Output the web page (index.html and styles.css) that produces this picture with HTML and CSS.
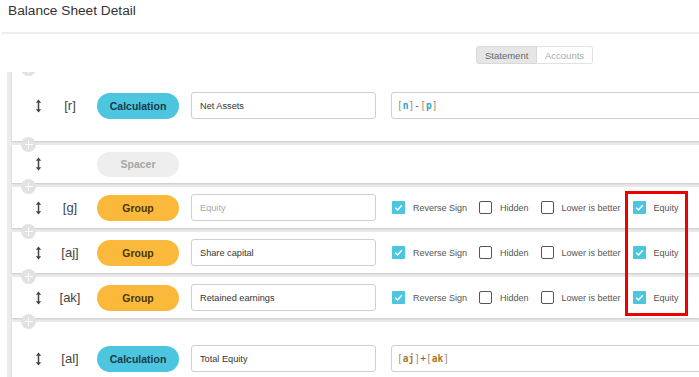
FILE: index.html
```html
<!DOCTYPE html>
<html lang="en">
<head>
  <meta charset="UTF-8">
  <meta name="viewport" content="width=device-width, initial-scale=1.0">
  <title>Balance Sheet Detail</title>
  <link rel="stylesheet" href="styles.css">
</head>
<body>

  <div class="page">
    <header class="page-head">
      <h1>Balance Sheet Detail</h1>
    </header>

    <div class="view-toggle">
      <button class="toggle active">Statement</button>
      <button class="toggle">Accounts</button>
    </div>

    <div class="list-view">
      <ul class="rows">
        <!-- calculation row -->
        <li class="row row-calc">
          <span class="add-btn"></span>
          <span class="handle"><svg width="7" height="14" viewBox="0 0 7 14"><path d="M3.5 3v8" stroke="#444" stroke-width="1.5"/><polygon points="0.8,3.8 3.5,0.6 6.2,3.8" fill="#444"/><polygon points="0.8,10.2 3.5,13.4 6.2,10.2" fill="#444"/></svg></span>
          <span class="ref">[r]</span>
          <span class="pill pill-calc">Calculation</span>
          <input class="field" type="text" value="Net Assets">
          <div class="field formula"><span class="br">[</span><span class="v-blue">n</span><span class="br">]</span><span class="op">-</span><span class="br">[</span><span class="v-blue">p</span><span class="br">]</span></div>
        </li>

        <!-- spacer row -->
        <li class="row row-spacer">
          <span class="add-btn"></span>
          <span class="handle"><svg width="7" height="14" viewBox="0 0 7 14"><path d="M3.5 3v8" stroke="#444" stroke-width="1.5"/><polygon points="0.8,3.8 3.5,0.6 6.2,3.8" fill="#444"/><polygon points="0.8,10.2 3.5,13.4 6.2,10.2" fill="#444"/></svg></span>
          <span class="ref"></span>
          <span class="pill pill-spacer">Spacer</span>
        </li>

        <!-- group rows -->
        <li class="row row-group">
          <span class="add-btn"></span>
          <span class="handle"><svg width="7" height="14" viewBox="0 0 7 14"><path d="M3.5 3v8" stroke="#444" stroke-width="1.5"/><polygon points="0.8,3.8 3.5,0.6 6.2,3.8" fill="#444"/><polygon points="0.8,10.2 3.5,13.4 6.2,10.2" fill="#444"/></svg></span>
          <span class="ref">[g]</span>
          <span class="pill pill-group">Group</span>
          <input class="field" type="text" placeholder="Equity">
          <div class="checks">
            <label class="check on"><span class="box"><svg width="13" height="13" viewBox="0 0 13 13"><polyline points="3.2,6.8 5.5,9 9.8,4.2" fill="none" stroke="#fff" stroke-width="1.5"/></svg></span>Reverse Sign</label>
            <label class="check"><span class="box"></span>Hidden</label>
            <label class="check"><span class="box"></span>Lower is better</label>
            <label class="check on"><span class="box"><svg width="13" height="13" viewBox="0 0 13 13"><polyline points="3.2,6.8 5.5,9 9.8,4.2" fill="none" stroke="#fff" stroke-width="1.5"/></svg></span>Equity</label>
          </div>
        </li>

        <li class="row row-group">
          <span class="add-btn"></span>
          <span class="handle"><svg width="7" height="14" viewBox="0 0 7 14"><path d="M3.5 3v8" stroke="#444" stroke-width="1.5"/><polygon points="0.8,3.8 3.5,0.6 6.2,3.8" fill="#444"/><polygon points="0.8,10.2 3.5,13.4 6.2,10.2" fill="#444"/></svg></span>
          <span class="ref">[aj]</span>
          <span class="pill pill-group">Group</span>
          <input class="field" type="text" value="Share capital">
          <div class="checks">
            <label class="check on"><span class="box"><svg width="13" height="13" viewBox="0 0 13 13"><polyline points="3.2,6.8 5.5,9 9.8,4.2" fill="none" stroke="#fff" stroke-width="1.5"/></svg></span>Reverse Sign</label>
            <label class="check"><span class="box"></span>Hidden</label>
            <label class="check"><span class="box"></span>Lower is better</label>
            <label class="check on"><span class="box"><svg width="13" height="13" viewBox="0 0 13 13"><polyline points="3.2,6.8 5.5,9 9.8,4.2" fill="none" stroke="#fff" stroke-width="1.5"/></svg></span>Equity</label>
          </div>
        </li>

        <li class="row row-group">
          <span class="add-btn"></span>
          <span class="handle"><svg width="7" height="14" viewBox="0 0 7 14"><path d="M3.5 3v8" stroke="#444" stroke-width="1.5"/><polygon points="0.8,3.8 3.5,0.6 6.2,3.8" fill="#444"/><polygon points="0.8,10.2 3.5,13.4 6.2,10.2" fill="#444"/></svg></span>
          <span class="ref">[ak]</span>
          <span class="pill pill-group">Group</span>
          <input class="field" type="text" value="Retained earnings">
          <div class="checks">
            <label class="check on"><span class="box"><svg width="13" height="13" viewBox="0 0 13 13"><polyline points="3.2,6.8 5.5,9 9.8,4.2" fill="none" stroke="#fff" stroke-width="1.5"/></svg></span>Reverse Sign</label>
            <label class="check"><span class="box"></span>Hidden</label>
            <label class="check"><span class="box"></span>Lower is better</label>
            <label class="check on"><span class="box"><svg width="13" height="13" viewBox="0 0 13 13"><polyline points="3.2,6.8 5.5,9 9.8,4.2" fill="none" stroke="#fff" stroke-width="1.5"/></svg></span>Equity</label>
          </div>
        </li>

        <!-- total -->
        <li class="row row-calc">
          <span class="add-btn"></span>
          <span class="handle"><svg width="7" height="14" viewBox="0 0 7 14"><path d="M3.5 3v8" stroke="#444" stroke-width="1.5"/><polygon points="0.8,3.8 3.5,0.6 6.2,3.8" fill="#444"/><polygon points="0.8,10.2 3.5,13.4 6.2,10.2" fill="#444"/></svg></span>
          <span class="ref">[al]</span>
          <span class="pill pill-calc">Calculation</span>
          <input class="field" type="text" value="Total Equity">
          <div class="field formula"><span class="br">[</span><span class="v-gold">aj</span><span class="br">]</span><span class="op">+</span><span class="br">[</span><span class="v-gold">ak</span><span class="br">]</span></div>
        </li>
      </ul>
    </div>

    <div class="highlight"></div>
  </div>

</body>
</html>
```

FILE: styles.css
```css
* {
  box-sizing: border-box;
  margin: 0;
  padding: 0;
}

body {
  font-family: "Liberation Sans", Arial, sans-serif;
  color: #333;
  background-color: #fff;
  overflow: hidden;
}

.page {
  position: relative;
  width: 1069px;
  height: 377px;
}

.page-head {
  height: 34px;
  margin-left: 2px;
  border-bottom: 2px solid #eeeeee;
}

.page-head h1 {
  font-size: 13.7px;
  font-weight: normal;
  color: #333;
  padding: 3px 0 0 6px;
  line-height: 16px;
}

/* Statement / Accounts switch */
.view-toggle {
  display: flex;
  justify-content: center;
  margin-top: 12px;
  height: 18px;
}

.toggle {
  font-family: "Liberation Sans", Arial, sans-serif;
  font-size: 9.5px;
  height: 18px;
  padding: 0 8px;
  background-color: #fff;
  color: #aaa;
  border: 1px solid #e2e2e2;
  border-left: none;
  border-radius: 0 3px 3px 0;
  cursor: pointer;
}

.toggle.active {
  width: 61px;
  background-color: #e6e6e6;
  color: #666;
  border: 1px solid #d8d8d8;
  border-radius: 3px 0 0 3px;
}

.toggle:not(.active) {
  width: 56px;
}

/* list of statement lines */
.list-view {
  margin-top: 8px;
  height: 305px;
  overflow: hidden;
}

.rows {
  list-style: none;
  margin: -3px 0 0 7px;
  padding: 0 0 0 5px;
  background-color: #ececec;
  display: flex;
  flex-direction: column;
  gap: 4px;
}

.row {
  position: relative;
  display: flex;
  align-items: center;
  background-color: #fff;
  padding-left: 18px;
  padding-right: 20px;
  box-shadow: 0 1px 2px rgba(0, 0, 0, 0.16);
}

.row-calc {
  height: 72px;
  padding-top: 1px;
}

.row-spacer {
  height: 38px;
}

.row-group {
  height: 41px;
}

.add-btn {
  position: absolute;
  left: 9px;
  top: -8px;
  width: 15px;
  height: 15px;
  border-radius: 50%;
  background-color: #e2e2e2;
}

.add-btn::before,
.add-btn::after {
  content: "";
  position: absolute;
  background-color: #fff;
}

.add-btn::before {
  left: 3.5px;
  top: 6.75px;
  width: 8px;
  height: 1.5px;
}

.add-btn::after {
  left: 6.75px;
  top: 3.5px;
  width: 1.5px;
  height: 8px;
}

.handle {
  width: 17px;
  display: flex;
  justify-content: center;
}

.handle svg {
  display: block;
}

.ref {
  width: 46px;
  text-align: center;
  font-size: 13px;
  color: #444;
}

.pill {
  width: 82px;
  height: 26px;
  margin-left: 4px;
  border-radius: 13px;
  display: flex;
  align-items: center;
  justify-content: center;
  font-size: 10.5px;
  font-weight: bold;
}

.pill-calc {
  background-color: #4cc5df;
  color: #163a48;
}

.pill-group {
  background-color: #fbb93c;
  color: #4a3504;
}

.pill-spacer {
  height: 25px;
  background-color: #eeeeee;
  color: #a5a5a5;
}

.field {
  width: 185px;
  height: 27px;
  margin-left: 12px;
  padding: 0 8px;
  border: 1px solid #cfcfcf;
  border-radius: 3px;
  font-family: "Liberation Sans", Arial, sans-serif;
  font-size: 9.2px;
  color: #333;
  background-color: #fff;
  outline: none;
}

.field::placeholder {
  color: #aaa;
}

.formula {
  flex: 1;
  margin-left: 15px;
  display: flex;
  align-items: center;
  padding-left: 5px;
  font-family: "DejaVu Sans Mono", "Liberation Mono", monospace;
  font-size: 9.6px;
}

.formula .br {
  color: #9b8a70;
}

.formula .op {
  color: #666;
}

.v-blue {
  color: #2fa3c9;
  font-weight: bold;
}

.v-gold {
  color: #b07a1c;
  font-weight: bold;
}

/* checkbox options */
.checks {
  display: flex;
  align-items: center;
  margin-left: 16px;
}

.check {
  display: flex;
  align-items: center;
  gap: 8px;
  margin-right: 12px;
  font-size: 9px;
  color: #555;
}

.check .box {
  width: 13px;
  height: 13px;
  border: 1.5px solid #555;
  border-radius: 2px;
  background-color: #fff;
}

.check.on .box {
  border: none;
  border-radius: 1px;
  background-color: #4cc5df;
}

.check .box svg {
  display: block;
}

/* red annotation box */
.highlight {
  position: absolute;
  left: 625px;
  top: 191px;
  width: 63px;
  height: 125px;
  border: 3px solid #ee0000;
}
```
